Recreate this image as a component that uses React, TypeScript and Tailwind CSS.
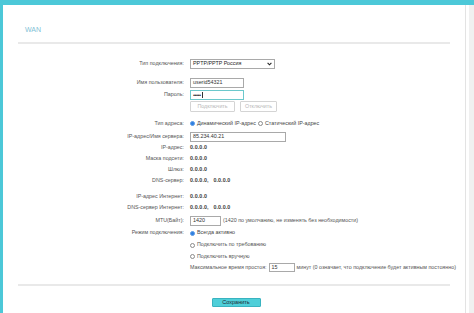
const Radio = ({ checked }: { checked?: boolean }) => (
  <span
    className={
      checked
        ? "inline-block w-[5px] h-[5px] rounded-full bg-[#2f7fe0] border border-[#5a9be8] shrink-0"
        : "inline-block w-[5px] h-[5px] rounded-full bg-white border border-[#8a8a8a] shrink-0"
    }
  />
);

const Row = ({
  label,
  className = "h-[11px]",
  children,
}: {
  label?: string;
  className?: string;
  children?: React.ReactNode;
}) => (
  <div className={`flex items-center ${className}`}>
    <div className="w-[166px] shrink-0 text-right text-[#555]">{label}</div>
    <div className="ml-[6px] flex items-center gap-[2px] whitespace-nowrap">{children}</div>
  </div>
);

const Value = ({ children }: { children: React.ReactNode }) => (
  <span className="text-[#3a3a3a] font-bold tracking-[0.1px]">{children}</span>
);

export default function App() {
  return (
    <div className="w-[474px] h-[313px] flex flex-col bg-white overflow-hidden font-['Liberation_Sans',Arial,sans-serif] text-[5.35px] leading-none">
      <div className="h-[5px] shrink-0 bg-[#4cc8d8]" />
      <div className="flex flex-1 min-h-0">
        <div className="w-[3px] bg-[#4cc8d8]" />
        <div className="w-[463px] border-r border-[#e3e3e3] px-[15px]">
          <div className="pt-[21px] pl-[7px] text-[7px] h-[29px] text-[#7fbfd6]">WAN</div>
          <div className="mt-[8px] h-[2px] bg-[#e9e9e9]" />

          <Row label="Тип подключения:" className="h-[12px] mt-[14px]">
            <div className="w-[85px] h-[10px] border border-[#a9a9a9] flex items-center justify-between px-[2px] text-[#222]">
              <span>PPTP/PPTP Россия</span>
              <svg width="5" height="4" viewBox="0 0 5 4">
                <path d="M0.6 0.8 L2.5 2.8 L4.4 0.8" stroke="#222" strokeWidth="1.1" fill="none" />
              </svg>
            </div>
          </Row>
          <Row label="Имя пользователя:" className="h-[11px] mt-[7px]">
            <div className="w-[54px] h-[10px] border border-[#a9a9a9] flex items-center px-[2px] text-[#333]">
              userid54321
            </div>
          </Row>
          <Row label="Пароль:" className="h-[11px] mt-[1px]">
            <div className="w-[54px] h-[10px] border border-[#6cc8cc] flex items-center px-[2px] text-[#333]">
              <span className="text-[6px] tracking-[-0.6px]">•••••</span>
              <span className="inline-block w-px h-[6px] bg-[#333] ml-[1px]" />
            </div>
          </Row>
          <Row className="h-[11px] mt-[1px]">
            <div className="w-[45px] h-[11px] border border-[#d4d4d4] rounded-[1px] flex items-center justify-center text-[#b8b8b8]">
              Подключить
            </div>
            <div className="ml-[3px] w-[37px] h-[11px] border border-[#d4d4d4] rounded-[1px] flex items-center justify-center text-[#b8b8b8]">
              Отключить
            </div>
          </Row>

          <Row label="Тип адреса:" className="h-[11px] mt-[6px]">
            <Radio checked />
            <span className="text-[#444]">Динамический IP-адрес</span>
            <Radio />
            <span className="text-[#444]">Статический IP-адрес</span>
          </Row>
          <Row label="IP-адрес/Имя сервера:" className="h-[11px] mt-[2px]">
            <div className="w-[96px] h-[10px] border border-[#a9a9a9] flex items-center px-[2px] text-[#333]">
              85.234.40.21
            </div>
          </Row>
          <Row label="IP-адрес:">
            <Value>0.0.0.0</Value>
          </Row>
          <Row label="Маска подсети:">
            <Value>0.0.0.0</Value>
          </Row>
          <Row label="Шлюз:">
            <Value>0.0.0.0</Value>
          </Row>
          <Row label="DNS-сервер:">
            <Value>0.0.0.0,&nbsp;&nbsp;&nbsp;0.0.0.0</Value>
          </Row>

          <Row label="IP-адрес Интернет:" className="h-[11px] mt-[5px]">
            <Value>0.0.0.0</Value>
          </Row>
          <Row label="DNS-сервер Интернет:">
            <Value>0.0.0.0,&nbsp;&nbsp;&nbsp;0.0.0.0</Value>
          </Row>

          <Row label="MTU(Байт):" className="h-[12px] mt-[2px]">
            <div className="w-[31px] h-[10px] border border-[#a9a9a9] flex items-center px-[2px] text-[#333]">
              1420
            </div>
            <span className="text-[#555]">(1420 по умолчанию, не изменять без необходимости)</span>
          </Row>
          <Row label="Режим подключения:" className="h-[12px]">
            <Radio checked />
            <span className="text-[#444]">Всегда активно</span>
          </Row>
          <Row className="h-[12px]">
            <Radio />
            <span className="text-[#555]">Подключить по требованию</span>
          </Row>
          <Row className="h-[11px]">
            <Radio />
            <span className="text-[#555]">Подключить вручную</span>
          </Row>
          <Row className="h-[11px]">
            <span className="text-[#555]">Максимальное время простоя:</span>
            <div className="w-[26px] h-[9px] border border-[#a9a9a9] flex items-center px-[2px] text-[#333]">
              15
            </div>
            <span className="text-[#555]">минут (0 означает, что подключение будет активным постоянно)</span>
          </Row>

          <div className="mt-[11px] h-[2px] bg-[#e9e9e9]" />
          <div className="mt-[12px] flex justify-center pl-[4px]">
            <button className="w-[49px] h-[9px] bg-[#4fcfd9] border border-[#39b3c0] rounded-[1px] text-[#1d2b33] text-[5.5px] leading-none">
              Сохранить
            </button>
          </div>
        </div>
        <div className="w-[3px]" />
        <div className="w-[5px] bg-[#f0f0f0]" />
      </div>
    </div>
  );
}
